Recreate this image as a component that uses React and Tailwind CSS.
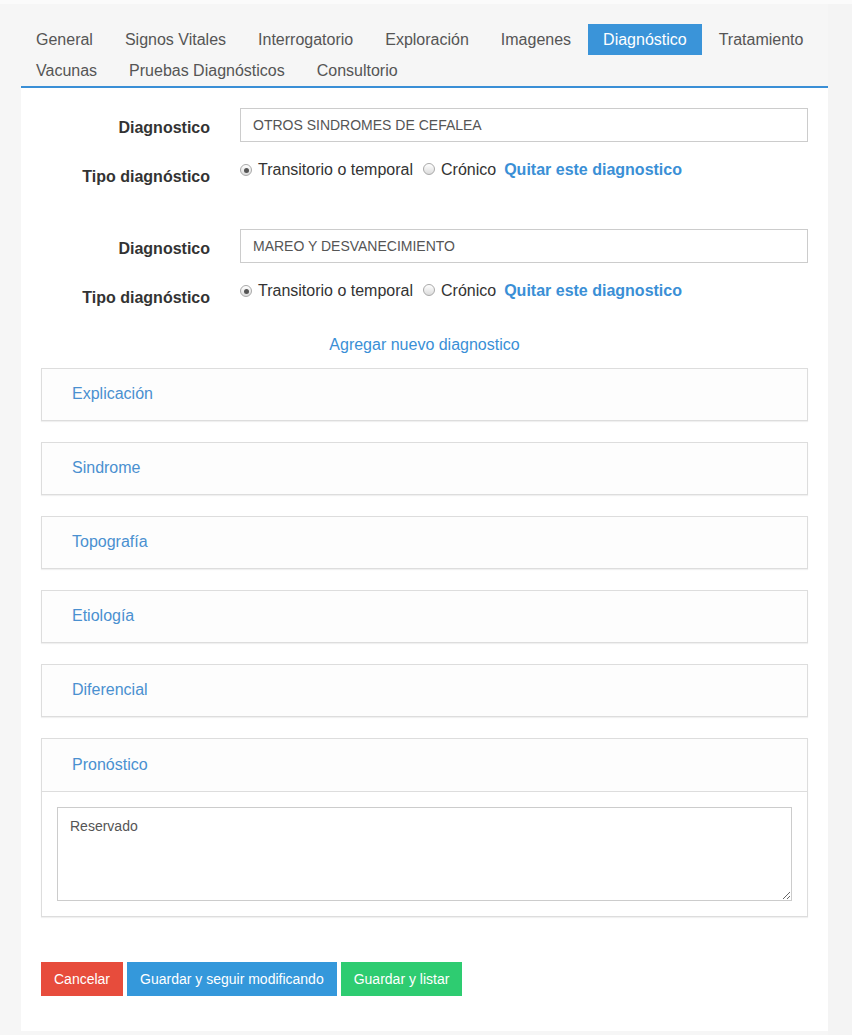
import React, { useState } from 'react';

const tabs = [
  'General',
  'Signos Vitales',
  'Interrogatorio',
  'Exploración',
  'Imagenes',
  'Diagnóstico',
  'Tratamiento',
  'Vacunas',
  'Pruebas Diagnósticos',
  'Consultorio',
];

const sections = ['Explicación', 'Sindrome', 'Topografía', 'Etiología', 'Diferencial'];

const Radio = ({ checked }) => (
  <span className="inline-flex items-center justify-center w-[12px] h-[12px] rounded-full border border-[#a9a9a9] bg-gradient-to-b from-[#ffffff] to-[#dcdcdc] shrink-0">
    {checked && <span className="w-[5px] h-[5px] rounded-full bg-[#555]" />}
  </span>
);

const DiagnosticoBlock = ({ value, last }) => (
  <div className={last ? '' : 'mb-[43px]'}>
    <div className="flex items-center">
      <label className="w-[169px] text-right font-bold text-[16px] text-[#333] pt-[5px]">Diagnostico</label>
      <div className="ml-[30px] flex-1 h-[34px] border border-[#ccc] bg-white flex items-center px-[12px] text-[14px] text-[#555] uppercase">
        {value}
      </div>
    </div>
    <div className="flex items-start mt-[14px] h-[30px]">
      <label className="w-[169px] text-right font-bold text-[16px] text-[#333] pt-[11px] leading-[20px]">
        Tipo diagnóstico
      </label>
      <div className="ml-[30px] flex items-center pt-[4px] leading-[20px] text-[16px] text-[#333]">
        <Radio checked />
        <span className="ml-[6px]">Transitorio o temporal</span>
        <span className="ml-[10px]"><Radio /></span>
        <span className="ml-[6px]">Crónico</span>
        <a className="ml-[8px] font-bold text-[#3a8fd6] cursor-pointer">Quitar este diagnostico</a>
      </div>
    </div>
  </div>
);

const App = () => {
  const [activeTab, setActiveTab] = useState('Diagnóstico');

  return (
    <div className="min-h-[1035px] bg-[#f4f4f4] font-['Liberation_Sans',Arial,sans-serif]">
      <div className="h-[4px] bg-[#fbfbfb]" />
      <div className="w-[828px] bg-[#f6f6f6] pb-[4px]">
        <div className="pl-[21px] pt-[20px]">
          <div className="flex flex-wrap w-[807px]">
            {tabs.map((tab) => (
              <button
                key={tab}
                onClick={() => setActiveTab(tab)}
                className={`mr-[2px] px-[15px] py-[6px] leading-[19px] text-[16px] ${
                  activeTab === tab ? 'bg-[#3a94d9] text-white' : 'text-[#555]'
                }`}
              >
                {tab}
              </button>
            ))}
          </div>
        </div>

        <div className="ml-[21px] w-[807px] bg-white border-t-2 border-[#3a8fd6] px-[20px] pt-[20px] pb-[35px]">
          <DiagnosticoBlock value="OTROS SINDROMES DE CEFALEA" />
          <DiagnosticoBlock value="MAREO Y DESVANECIMIENTO" last />

          <div className="mt-[28px] text-center leading-[20px] text-[16px] text-[#3a8fd6]">
            <a className="cursor-pointer">Agregar nuevo diagnostico</a>
          </div>

          <div className="mt-[13px]">
            {sections.map((s) => (
              <div
                key={s}
                className="mb-[21px] h-[53px] border border-[#dddddd] bg-[#fdfdfd] shadow-[0_1px_1px_rgba(0,0,0,0.06)] flex items-center pl-[30px] pb-[1px] text-[16px] text-[#4a90d0]"
              >
                {s}
              </div>
            ))}

            <div className="border border-[#dddddd] bg-white shadow-[0_1px_1px_rgba(0,0,0,0.06)]">
              <div className="h-[53px] bg-[#fdfdfd] border-b border-[#dddddd] flex items-center pl-[30px] pb-[1px] text-[16px] text-[#4a90d0]">
                Pronóstico
              </div>
              <div className="p-[15px]">
                <textarea
                  defaultValue="Reservado"
                  className="block w-full h-[94px] border border-[#ccc] px-[12px] py-[8px] text-[14px] text-[#555] outline-none"
                />
              </div>
            </div>
          </div>

          <div className="mt-[45px] flex gap-[4px]">
            <button className="h-[34px] px-[13px] bg-[#e74c3c] text-white text-[14px]">Cancelar</button>
            <button className="h-[34px] px-[13px] bg-[#3498db] text-white text-[14px]">Guardar y seguir modificando</button>
            <button className="h-[34px] px-[13px] bg-[#2ecc71] text-white text-[14px]">Guardar y listar</button>
          </div>
        </div>
      </div>
    </div>
  );
};

export default App;
